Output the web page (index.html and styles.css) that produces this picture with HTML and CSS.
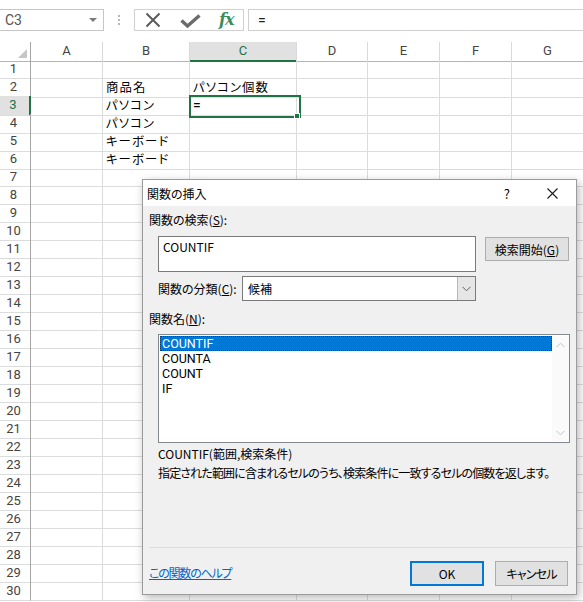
FILE: index.html
```html
<!DOCTYPE html>
<html lang="ja">
<head>
<meta charset="utf-8">
<title>Excel</title>
<link rel="stylesheet" href="styles.css">
</head>
<body>
<div class="fbar">
  <div class="namebox"><span>C3</span><span class="caret"></span></div>
  <div class="dots"><i></i><i></i><i></i></div>
  <div class="fxbox">
    <svg class="ic-x" width="16" height="16" viewBox="0 0 16 16"><path d="M1.5 1.5 L14.5 14.5 M14.5 1.5 L1.5 14.5" stroke="#5b5b5b" stroke-width="2" fill="none"/></svg>
    <svg class="ic-ok" width="21" height="14" viewBox="0 0 21 14"><path d="M1.5 6.5 L7.5 12 L19.5 1.5" stroke="#6b6b6b" stroke-width="3.4" fill="none"/></svg>
    <span class="fx">fx</span>
  </div>
  <div class="formula">=</div>
</div>

<div class="sheet">
  <div class="row hdr"><div class="corner"><span class="tri"></span></div><div class="ch">A</div><div class="ch">B</div><div class="ch sel">C</div><div class="ch">D</div><div class="ch">E</div><div class="ch">F</div><div class="ch">G</div></div>
  <div class="row"><div class="rh">1</div><div></div><div></div><div></div><div></div><div></div><div></div><div></div></div>
  <div class="row"><div class="rh">2</div><div></div><div class="jp">商品名</div><div class="jp">パソコン個数</div><div></div><div></div><div></div><div></div></div>
  <div class="row"><div class="rh sel">3</div><div></div><div class="jp">パソコン</div><div class="active">=<span class="handle"></span></div><div></div><div></div><div></div><div></div></div>
  <div class="row"><div class="rh">4</div><div></div><div class="jp">パソコン</div><div></div><div></div><div></div><div></div><div></div></div>
  <div class="row"><div class="rh">5</div><div></div><div class="jp">キーボード</div><div></div><div></div><div></div><div></div><div></div></div>
  <div class="row"><div class="rh">6</div><div></div><div class="jp">キーボード</div><div></div><div></div><div></div><div></div><div></div></div>
  <div class="row"><div class="rh">7</div><div></div><div></div><div></div><div></div><div></div><div></div><div></div></div>
  <div class="row"><div class="rh">8</div><div></div><div></div><div></div><div></div><div></div><div></div><div></div></div>
  <div class="row"><div class="rh">9</div><div></div><div></div><div></div><div></div><div></div><div></div><div></div></div>
  <div class="row"><div class="rh">10</div><div></div><div></div><div></div><div></div><div></div><div></div><div></div></div>
  <div class="row"><div class="rh">11</div><div></div><div></div><div></div><div></div><div></div><div></div><div></div></div>
  <div class="row"><div class="rh">12</div><div></div><div></div><div></div><div></div><div></div><div></div><div></div></div>
  <div class="row"><div class="rh">13</div><div></div><div></div><div></div><div></div><div></div><div></div><div></div></div>
  <div class="row"><div class="rh">14</div><div></div><div></div><div></div><div></div><div></div><div></div><div></div></div>
  <div class="row"><div class="rh">15</div><div></div><div></div><div></div><div></div><div></div><div></div><div></div></div>
  <div class="row"><div class="rh">16</div><div></div><div></div><div></div><div></div><div></div><div></div><div></div></div>
  <div class="row"><div class="rh">17</div><div></div><div></div><div></div><div></div><div></div><div></div><div></div></div>
  <div class="row"><div class="rh">18</div><div></div><div></div><div></div><div></div><div></div><div></div><div></div></div>
  <div class="row"><div class="rh">19</div><div></div><div></div><div></div><div></div><div></div><div></div><div></div></div>
  <div class="row"><div class="rh">20</div><div></div><div></div><div></div><div></div><div></div><div></div><div></div></div>
  <div class="row"><div class="rh">21</div><div></div><div></div><div></div><div></div><div></div><div></div><div></div></div>
  <div class="row"><div class="rh">22</div><div></div><div></div><div></div><div></div><div></div><div></div><div></div></div>
  <div class="row"><div class="rh">23</div><div></div><div></div><div></div><div></div><div></div><div></div><div></div></div>
  <div class="row"><div class="rh">24</div><div></div><div></div><div></div><div></div><div></div><div></div><div></div></div>
  <div class="row"><div class="rh">25</div><div></div><div></div><div></div><div></div><div></div><div></div><div></div></div>
  <div class="row"><div class="rh">26</div><div></div><div></div><div></div><div></div><div></div><div></div><div></div></div>
  <div class="row"><div class="rh">27</div><div></div><div></div><div></div><div></div><div></div><div></div><div></div></div>
  <div class="row"><div class="rh">28</div><div></div><div></div><div></div><div></div><div></div><div></div><div></div></div>
  <div class="row"><div class="rh">29</div><div></div><div></div><div></div><div></div><div></div><div></div><div></div></div>
  <div class="row"><div class="rh">30</div><div></div><div></div><div></div><div></div><div></div><div></div><div></div></div>
</div>

<div class="dialog">
  <div class="titlebar">
    <span class="title">関数の挿入</span>
    <span class="help">?</span>
    <svg class="close" width="11" height="11" viewBox="0 0 11 11"><path d="M0.5 0.5 L10.5 10.5 M10.5 0.5 L0.5 10.5" stroke="#1a1a1a" stroke-width="1.1" fill="none"/></svg>
  </div>
  <div class="dbody">
    <div class="lbl">関数の検索(<u>S</u>):</div>
    <div class="search-row">
      <div class="searchbox">COUNTIF</div>
      <div class="btn go">検索開始(<u>G</u>)</div>
    </div>
    <div class="cat-row">
      <span class="cat-lbl">関数の分類(<u>C</u>):</span>
      <div class="select">
        <span class="sel-text">候補</span>
        <span class="sel-btn"><svg width="9" height="6" viewBox="0 0 9 6"><path d="M0.5 0.8 L4.5 4.8 L8.5 0.8" stroke="#606060" stroke-width="1" fill="none"/></svg></span>
      </div>
    </div>
    <div class="lbl lbl2">関数名(<u>N</u>):</div>
    <div class="list">
      <div class="items">
        <div class="item on">COUNTIF</div>
        <div class="item">COUNTA</div>
        <div class="item">COUNT</div>
        <div class="item">IF</div>
      </div>
      <div class="scroll">
        <svg width="9" height="6" viewBox="0 0 9 6"><path d="M0.5 5.2 L4.5 1.2 L8.5 5.2" stroke="#c2c2c2" stroke-width="1" fill="none"/></svg>
        <svg width="9" height="6" viewBox="0 0 9 6"><path d="M0.5 0.8 L4.5 4.8 L8.5 0.8" stroke="#c2c2c2" stroke-width="1" fill="none"/></svg>
      </div>
    </div>
    <div class="syntax">COUNTIF(範囲,検索条件)</div>
    <div class="desc">指定された範囲に含まれるセルのうち、検索条件に一致するセルの個数を返します。</div>
    <div class="spacer"></div>
    <div class="sep"></div>
    <div class="footer">
      <a class="link" href="#">この関数のヘルプ</a>
      <div class="btns">
        <div class="btn ok">OK</div>
        <div class="btn cancel">キャンセル</div>
      </div>
    </div>
  </div>
</div>
</body>
</html>
```

FILE: styles.css
```css
* { box-sizing: border-box; }

body {
  margin: 0;
  width: 583px;
  height: 602px;
  overflow: hidden;
  background: #fff;
  position: relative;
  font-family: "Noto Sans CJK JP", "Noto Sans", sans-serif;
  font-feature-settings: "palt";
  color: #000;
}

/* formula bar */
.fbar {
  height: 42px;
  display: flex;
  align-items: flex-start;
  padding-top: 9px;
}
.namebox {
  width: 104px;
  height: 22px;
  border: 1px solid #c6c6c6;
  border-left: none;
  display: flex;
  align-items: center;
  justify-content: space-between;
  padding: 0 6px 0 5px;
  font-family: "Roboto", "Noto Sans", sans-serif;
  font-size: 14px;
  color: #555;
}
.caret {
  width: 0;
  height: 0;
  border-left: 4px solid transparent;
  border-right: 4px solid transparent;
  border-top: 4px solid #7a7a7a;
}
.dots {
  width: 30px;
  height: 22px;
  display: flex;
  flex-direction: column;
  align-items: center;
  justify-content: center;
  gap: 2px;
}
.dots i {
  display: block;
  width: 2px;
  height: 2px;
  background: #b8b8b8;
}
.fxbox {
  width: 110px;
  height: 22px;
  border: 1px solid #d0d0d0;
  display: flex;
  align-items: center;
}
.ic-x { margin-left: 10px; }
.ic-ok { margin-left: 19px; margin-top: 1px; }
.fx {
  margin-left: 18px;
  font-family: "DejaVu Serif", "Liberation Serif", serif;
  font-style: italic;
  font-weight: bold;
  font-size: 16px;
  color: #3b8c5d;
  letter-spacing: -1px;
  margin-top: -2px;
}
.formula {
  flex: 1;
  margin-left: 4px;
  height: 22px;
  border: 1px solid #d0d0d0;
  border-right: none;
  padding-left: 9px;
  font-family: "Roboto", "Noto Sans", sans-serif;
  font-size: 14px;
  line-height: 20px;
  color: #222;
}

/* sheet */
.sheet { display: flex; flex-direction: column; }
.row {
  display: grid;
  grid-template-columns: 31px 72px 87px 107px 71px 72px 72px 72px;
  height: 18px;
}
.row > div {
  border-right: 1px solid #dadcdd;
  border-bottom: 1px solid #dadcdd;
  font-size: 14px;
  line-height: 18px;
  padding-left: 3px;
  white-space: nowrap;
  position: relative;
}
.row > .jp {
  font-size: 12.4px;
  letter-spacing: 1.1px;
  line-height: 19px;
}
.row > .rh {
  border-right: 1px solid #a6a6a6;
  color: #444;
  text-align: center;
  padding: 0 3px 0 0;
  font-family: "Roboto", "Noto Sans", sans-serif;
  font-size: 13px;
}
.row > .rh.sel {
  background: #e1e1e1;
  color: #217346;
  border-right: 2px solid #217346;
}
.hdr > div {
  border-bottom: 1px solid #b5b5b5;
  border-right: 1px solid #d8d8d8;
  color: #444;
  text-align: center;
  padding: 0;
  font-family: "Roboto", "Noto Sans", sans-serif;
  font-size: 13px;
}
.hdr > .ch.sel {
  background: #e1e1e1;
  color: #217346;
  border-bottom: 2px solid #217346;
}
.hdr > .corner {
  border-right: 1px solid #a6a6a6;
}
.tri {
  position: absolute;
  right: 3px;
  bottom: 3px;
  width: 0;
  height: 0;
  border-left: 9px solid transparent;
  border-bottom: 9px solid #c6c6c6;
}
.row > .active {
  overflow: visible;
  font-family: "Roboto", "Noto Sans", sans-serif;
  padding-left: 3px;
}
.active::before {
  content: "";
  position: absolute;
  left: -1px;
  top: -1px;
  width: 108px;
  height: 19px;
  border: 2px solid #217346;
  z-index: 2;
}
.handle {
  position: absolute;
  right: -4px;
  bottom: -4px;
  width: 6px;
  height: 6px;
  background: #217346;
  border: 1px solid #fff;
  z-index: 3;
}

/* dialog */
.dialog {
  position: absolute;
  left: 142px;
  top: 179px;
  width: 435px;
  height: 416px;
  border: 1px solid #9b9b9b;
  background: #f0f0f0;
  box-shadow: 2px 3px 9px rgba(0, 0, 0, 0.28);
  display: flex;
  flex-direction: column;
  font-size: 12px;
  z-index: 10;
}
.titlebar {
  height: 26px;
  background: #fff;
  display: flex;
  align-items: center;
  padding-left: 4px;
}
.title { flex: 1; font-size: 12px; }
.help { font-size: 13px; margin-right: 37px; }
.close { margin-right: 18px; }

.dbody {
  flex: 1;
  display: flex;
  flex-direction: column;
  padding: 0 0 0 6px;
}
u { text-decoration: underline; text-underline-offset: 1px; }
.lbl { line-height: 16px; margin-top: 6px; }
.lbl2 { margin-top: 10px; }

.search-row {
  display: flex;
  align-items: flex-start;
  margin-top: 8px;
  padding-left: 9px;
}
.searchbox {
  width: 318px;
  height: 36px;
  background: #fff;
  border: 1px solid #7a7a7a;
  padding: 2px 4px;
  line-height: 16px;
}
.btn {
  background: #e1e1e1;
  border: 1px solid #adadad;
  display: flex;
  align-items: center;
  justify-content: center;
}
.go {
  width: 84px;
  height: 24px;
  margin: 1px 0 0 9px;
}

.cat-row {
  display: flex;
  align-items: center;
  margin-top: 4px;
  padding-left: 9px;
}
.cat-lbl { width: 84px; }
.select {
  width: 234px;
  height: 25px;
  background: #fff;
  border: 1px solid #7a7a7a;
  display: flex;
  align-items: stretch;
}
.sel-text { flex: 1; padding-left: 5px; line-height: 23px; }
.sel-btn {
  width: 18px;
  background: #e6e6e6;
  border-left: 1px solid #b9b9b9;
  display: flex;
  align-items: center;
  justify-content: center;
}

.list {
  margin: 7px 0 0 9px;
  width: 412px;
  height: 109px;
  background: #fff;
  border: 1px solid #828790;
  display: flex;
  padding: 1px 0 1px 1px;
}
.items { flex: 1; }
.item {
  height: 15px;
  line-height: 15px;
  padding-left: 2px;
  font-family: "Roboto", "Noto Sans", sans-serif;
  font-size: 12.5px;
}
.item.on {
  background: #0078d7;
  color: #fff;
  outline: 1px dotted #0a3c6e;
  outline-offset: -1px;
}
.scroll {
  width: 17px;
  display: flex;
  flex-direction: column;
  justify-content: space-between;
  align-items: center;
  padding: 6px 0 5px;
  background: #fafafa;
}

.syntax { line-height: 16px; margin: 3px 0 0 9px; }
.desc {
  line-height: 16px;
  margin: 3px 0 0 9px;
  white-space: nowrap;
  letter-spacing: -0.85px;
}
.spacer { flex: 1; }
.sep { height: 1px; background: #dcdcdc; margin-right: 1px; }
.footer {
  display: flex;
  align-items: flex-start;
  justify-content: space-between;
  padding: 13px 8px 8px 0;
}
.link {
  color: #0066cc;
  text-decoration: underline;
  margin-top: 3px;
  letter-spacing: -1.2px;
}
.btns { display: flex; gap: 11px; }
.ok {
  width: 74px;
  height: 25px;
  border: 2px solid #0078d7;
}
.cancel {
  width: 73px;
  height: 25px;
  letter-spacing: -0.8px;
}
```
